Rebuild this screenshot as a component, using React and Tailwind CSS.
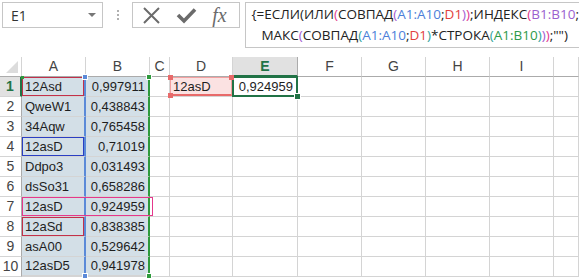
const COLW = [
  "w-[22px]",
  "w-[64px]",
  "w-[64px]",
  "w-[20px]",
  "w-[63px]",
  "w-[65px]",
  "w-[64px]",
  "w-[64px]",
  "w-[64px]",
  "w-[64px]",
  "w-[25px]",
];
const HEADS = ["", "A", "B", "C", "D", "E", "F", "G", "H", "I", ""];

const colA = ["12Asd", "QweW1", "34Aqw", "12asD", "Ddpo3", "dsSo31", "12asD", "12aSd", "asA00", "12asD5"];
const colB = ["0,997911", "0,438843", "0,765458", "0,71019", "0,031493", "0,658286", "0,924959", "0,838385", "0,529642", "0,941978"];

function Seg({ c, children }) {
  return <span className={c}>{children}</span>;
}

function FormulaBar() {
  return (
    <div className="flex h-[57px] items-start bg-white pt-[2px] pl-[2px]">
      <div className="flex h-[26px] w-[102px] items-center justify-between border border-[#c6c6c6] pl-[8px] pr-[6px] font-['Open_Sans',sans-serif] text-[14px] text-[#333]">
        E1
        <span className="h-0 w-0 border-x-[4px] border-t-[4px] border-x-transparent border-t-[#777]" />
      </div>
      <div className="ml-[14px] mt-[8px] flex flex-col gap-[2px]">
        <span className="h-[2px] w-[2px] bg-[#b0b0b0]" />
        <span className="h-[2px] w-[2px] bg-[#b0b0b0]" />
        <span className="h-[2px] w-[2px] bg-[#b0b0b0]" />
      </div>
      <div className="ml-[13px] flex h-[26px] w-[109px] items-center gap-[15px] border border-[#c6c6c6] pl-[9px] text-[#6b6b6b]">
        <svg width="19" height="19" viewBox="0 0 19 19">
          <path d="M2 2L17 17M17 2L2 17" stroke="#6b6b6b" strokeWidth="2" fill="none" />
        </svg>
        <svg width="21" height="18" viewBox="0 0 21 18">
          <path d="M2 9L8 15L19 3.5" stroke="#6b6b6b" strokeWidth="3.6" fill="none" />
        </svg>
        <span className="font-['Liberation_Serif',serif] text-[20px] italic leading-none">fx</span>
      </div>
      <div className="ml-[5px] h-[46px] flex-1 whitespace-nowrap border border-r-0 border-[#c6c6c6] pl-[5px] pt-[1px] font-['Open_Sans',sans-serif] text-[13.5px] leading-[21px] text-[#222]">
        <div>
          {"{=ЕСЛИ(ИЛИ"}
          <Seg c="text-[#e2388d]">(</Seg>
          СОВПАД
          <Seg c="text-[#a45ad1]">(</Seg>
          <Seg c="text-[#4d7fd9]">A1:A10</Seg>;
          <Seg c="text-[#e2413e]">D1</Seg>
          <Seg c="text-[#a45ad1]">)</Seg>
          <Seg c="text-[#e2388d]">)</Seg>
          ;ИНДЕКС
          <Seg c="text-[#e2388d]">(</Seg>
          <Seg c="text-[#9b5fcf]">B1:B10</Seg>;
        </div>
        <div className="pl-[10px]">
          МАКС
          <Seg c="text-[#a45ad1]">(</Seg>
          СОВПАД
          <Seg c="text-[#2fa39b]">(</Seg>
          <Seg c="text-[#4d7fd9]">A1:A10</Seg>;
          <Seg c="text-[#e2413e]">D1</Seg>
          <Seg c="text-[#2fa39b]">)</Seg>
          *СТРОКА
          <Seg c="text-[#2fa39b]">(</Seg>
          <Seg c="text-[#2e9a4a]">A1:B10</Seg>
          <Seg c="text-[#2fa39b]">)</Seg>
          <Seg c="text-[#a45ad1]">)</Seg>
          <Seg c="text-[#e2388d]">)</Seg>
          {';"")'}
        </div>
      </div>
    </div>
  );
}

function HeaderRow() {
  return (
    <div className="flex h-[20px] text-[14px]">
      {COLW.map((w, i) => {
        const sel = i === 5;
        return (
          <div
            key={i}
            className={`${w} flex shrink-0 items-center justify-center border-r ${
              sel
                ? "border-[#ababab] border-b-2 border-b-[#217346] bg-[#e1e1e1] font-bold text-[#217346]"
                : "border-[#d4d4d4] border-b border-b-[#ababab] text-[#444]"
            } ${i === 0 ? "items-end justify-end pr-[3px] pb-[3px]" : ""}`}
          >
            {i === 0 ? (
              <span className="h-0 w-0 border-b-[12px] border-l-[12px] border-b-[#dcdcdc] border-l-transparent" />
            ) : (
              HEADS[i]
            )}
          </div>
        );
      })}
    </div>
  );
}

// small selection handle sitting on a cell corner
function Handle({ className }) {
  return <span className={`absolute z-20 border border-white ${className}`} />;
}

function DataRow({ r }) {
  const last = r === 9;
  const outlineA =
    r === 0 ? "ring-1 ring-inset ring-[#c2304a]" : r === 3 ? "ring-1 ring-inset ring-[#2a3fc3]" : r === 7 ? "ring-1 ring-inset ring-[#c2304a]" : "";

  return (
    <div className="flex h-[20px] text-[13px] text-[#1e1e1e]">
      {/* row number */}
      <div
        className={`${COLW[0]} flex shrink-0 items-center justify-center border-b border-[#d4d4d4] text-[14px] ${
          r === 0 ? "border-r-2 border-r-[#217346] bg-[#e1e1e1] font-bold text-[#217346]" : "border-r border-r-[#ababab] text-[#444]"
        }`}
      >
        {r + 1}
      </div>

      {/* A */}
      <div
        className={`${COLW[1]} relative flex shrink-0 items-center border-b border-r-2 border-b-[#d4d4d4] border-r-[#5b8ad8] bg-[#d3dfe7] pl-[3px] ${outlineA} ${
          last ? "border-b-2 border-b-[#2e9a3c]" : ""
        }`}
      >
        {colA[r]}
        {r === 0 && <span className="absolute -top-[1px] -left-[1px] z-20 h-[3px] w-[3px] bg-[#2e9a3c]" />}
        {r === 0 && <Handle className="-top-[3px] -right-[4px] h-[6px] w-[6px] bg-[#5b8ad8]" />}
        {last && <Handle className="-bottom-[4px] -right-[4px] h-[6px] w-[6px] bg-[#5b8ad8]" />}
        {r === 6 && <span className="absolute inset-y-0 left-0 z-10 w-[131px] border border-[#e5388c]" />}
      </div>

      {/* B */}
      <div
        className={`${COLW[2]} relative flex shrink-0 items-center justify-end border-r-2 border-b border-b-[#d4d4d4] border-r-[#2e9a3c] bg-[#d3dfe7] pr-[3px] ${
          last ? "border-b-2 border-b-[#2e9a3c]" : ""
        }`}
      >
        {colB[r]}
        {r === 0 && <Handle className="-top-[3px] -right-[4px] h-[6px] w-[6px] bg-[#2e9a3c]" />}
        {last && <Handle className="-bottom-[4px] -right-[4px] h-[6px] w-[6px] bg-[#2e9a3c]" />}
      </div>

      {/* C */}
      <div className={`${COLW[3]} shrink-0 border-r border-b border-[#d4d4d4]`} />

      {/* D */}
      <div
        className={`${COLW[4]} relative flex shrink-0 items-center border-r border-b border-[#d4d4d4] pl-[3px] ${
          r === 0 ? "bg-[#fbe2e2]" : ""
        }`}
      >
        {r === 0 && (
          <>
            12asD
            <span className="absolute inset-0 z-10 border border-b-2 border-[#f3a0a0] border-b-[#e86a6a]" />
            <span className="absolute -top-[2px] -left-[2px] z-20 h-[5px] w-[5px] bg-[#e86a6a]" />
            <span className="absolute -top-[2px] -right-[2px] z-20 h-[5px] w-[5px] bg-[#e86a6a]" />
            <span className="absolute -bottom-[2px] -left-[2px] z-20 h-[5px] w-[5px] bg-[#e86a6a]" />
          </>
        )}
      </div>

      {/* E */}
      <div className={`${COLW[5]} relative flex shrink-0 items-center justify-end border-r border-b border-[#d4d4d4] pr-[4px]`}>
        {r === 0 && (
          <>
            0,924959
            <span className="absolute -inset-[1px] z-10 border-2 border-[#217346]" />
            <Handle className="-bottom-[4px] -right-[4px] h-[7px] w-[7px] bg-[#217346]" />
          </>
        )}
      </div>

      {COLW.slice(6).map((w, i) => (
        <div key={i} className={`${w} shrink-0 border-r border-b border-[#d4d4d4]`} />
      ))}
    </div>
  );
}

export default function App() {
  return (
    <div className="h-[279px] w-[579px] overflow-hidden bg-white font-['Liberation_Sans',Arial,sans-serif]">
      <FormulaBar />
      <HeaderRow />
      {colA.map((_, r) => (
        <DataRow key={r} r={r} />
      ))}
    </div>
  );
}
